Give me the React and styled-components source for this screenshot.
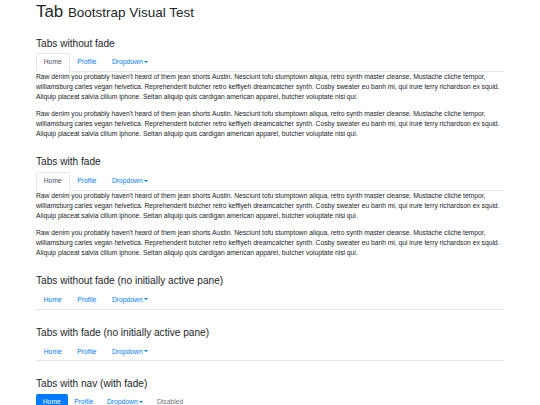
import React from "react";
import styled, { createGlobalStyle, css } from "styled-components";

const S = 0.4216;
const u = (n) => `${(n * S).toFixed(2)}px`;

const GlobalStyle = createGlobalStyle`
  html, body { margin: 0; padding: 0; background: #fff; }
  body {
    font-family: "Liberation Sans", Arial, Helvetica, sans-serif;
    font-size: ${u(16)};
    line-height: 1.5;
    color: #212529;
  }
  * { box-sizing: border-box; }
`;

const Container = styled.div`
  width: 100%;
  max-width: ${u(1140)};
  margin: 0 auto;
  padding: 2px ${u(15)} 0;
`;

const Title = styled.h1`
  font-size: ${u(40)};
  font-weight: 500;
  line-height: 1.2;
  margin: 0 0 ${u(8)};
  small {
    font-size: 80%;
    font-weight: 400;
  }
`;

const Section = styled.section`
  margin-top: ${(p) => p.$gap}px;
`;

const Heading = styled.h4`
  font-size: ${u(24)};
  font-weight: 500;
  line-height: 1.2;
  margin: 0 0 ${u(8)};
`;

const TabList = styled.ul`
  display: flex;
  list-style: none;
  margin: 0;
  padding: 0;
  border-bottom: 1px solid #e4e7ea;
`;

const TabItem = styled.li`
  margin-bottom: -1px;
`;

const TabLink = styled.a`
  display: block;
  padding: ${u(8)} ${u(16)};
  border: 1px solid transparent;
  border-top-left-radius: ${u(4)};
  border-top-right-radius: ${u(4)};
  color: #007bff;
  text-decoration: none;
  ${(p) =>
    p.$active &&
    css`
      color: #495057;
      background: #fff;
      border-color: #e4e7ea #e4e7ea #fff;
    `}
`;

const Caret = styled.span`
  display: inline-block;
  margin-left: 0.255em;
  vertical-align: 0.255em;
  border-top: 0.3em solid;
  border-right: 0.3em solid transparent;
  border-left: 0.3em solid transparent;
  border-bottom: 0;
`;

const Pane = styled.div`
  p {
    margin: 0 0 ${u(16)};
    letter-spacing: -0.03px;
  }
`;

const Pills = styled.nav`
  display: flex;
  flex-wrap: wrap;
`;

const PillLink = styled.a`
  display: block;
  padding: ${u(8)} ${u(16)};
  border-radius: ${u(4)};
  text-decoration: none;
  color: ${(p) => (p.$disabled ? "#6c757d" : "#007bff")};
  ${(p) =>
    p.$active &&
    css`
      color: #fff;
      background: #007bff;
    `}
`;

const TEXT =
  "Raw denim you probably haven't heard of them jean shorts Austin. Nesciunt tofu stumptown aliqua, retro synth master cleanse. Mustache cliche tempor, williamsburg carles vegan helvetica. Reprehenderit butcher retro keffiyeh dreamcatcher synth. Cosby sweater eu banh mi, qui irure terry richardson ex squid. Aliquip placeat salvia cillum iphone. Seitan aliquip quis cardigan american apparel, butcher voluptate nisi qui.";

function Tabs({ active }) {
  return (
    <TabList role="tablist">
      <TabItem>
        <TabLink href="#" $active={active}>Home</TabLink>
      </TabItem>
      <TabItem>
        <TabLink href="#">Profile</TabLink>
      </TabItem>
      <TabItem>
        <TabLink href="#">
          Dropdown<Caret />
        </TabLink>
      </TabItem>
    </TabList>
  );
}

export default function App() {
  return (
    <>
      <GlobalStyle />
      <Container>
        <Title>
          Tab <small>Bootstrap Visual Test</small>
        </Title>

        <Section $gap={15.4}>
          <Heading>Tabs without fade</Heading>
          <Tabs active />
          <Pane>
            <p>{TEXT}</p>
            <p>{TEXT}</p>
          </Pane>
        </Section>

        <Section $gap={17}>
          <Heading>Tabs with fade</Heading>
          <Tabs active />
          <Pane>
            <p>{TEXT}</p>
            <p>{TEXT}</p>
          </Pane>
        </Section>

        <Section $gap={17}>
          <Heading>Tabs without fade (no initially active pane)</Heading>
          <Tabs />
        </Section>

        <Section $gap={17.5}>
          <Heading>Tabs with fade (no initially active pane)</Heading>
          <Tabs />
        </Section>

        <Section $gap={17}>
          <Heading>Tabs with nav (with fade)</Heading>
          <Pills>
            <PillLink href="#" $active>Home</PillLink>
            <PillLink href="#">Profile</PillLink>
            <PillLink href="#">
              Dropdown<Caret />
            </PillLink>
            <PillLink href="#" $disabled>Disabled</PillLink>
          </Pills>
        </Section>
      </Container>
    </>
  );
}
